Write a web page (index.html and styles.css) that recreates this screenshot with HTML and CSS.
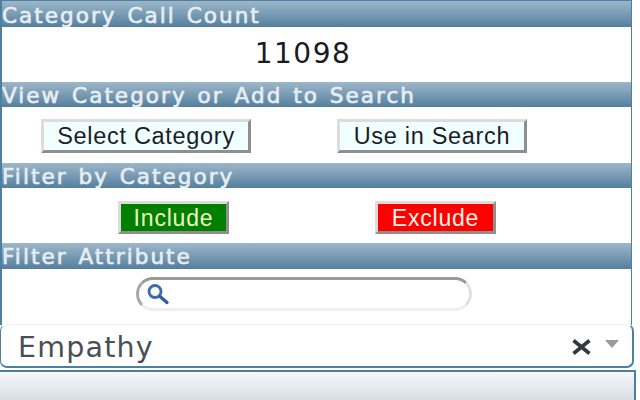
FILE: index.html
```html
<!DOCTYPE html>
<html lang="en">
<head>
<meta charset="utf-8">
<title>Category</title>
<link rel="stylesheet" href="styles.css">
</head>
<body>
<div class="page">
  <section class="panel">
    <h2 class="head">Category Call Count</h2>
    <div class="row count">11098</div>
    <h2 class="head h2">View Category or Add to Search</h2>
    <div class="row actions">
      <button class="btn b-select">Select Category</button>
      <button class="btn b-use">Use in Search</button>
    </div>
    <h2 class="head h2">Filter by Category</h2>
    <div class="row filters">
      <button class="btn include">Include</button>
      <button class="btn exclude">Exclude</button>
    </div>
    <h2 class="head h4">Filter Attribute</h2>
    <div class="row searchrow">
      <div class="search">
        <svg class="lens" width="28" height="24" viewBox="0 0 28 24"><circle cx="11" cy="9.5" r="6" fill="#f4f8fc" stroke="#3a6aa8" stroke-width="2.8"/><path d="M16 14.5 L23 20.5" stroke="#33609c" stroke-width="3.4" stroke-linecap="round"/></svg>
      </div>
    </div>
  </section>
  <div class="select">
    <span class="value">Empathy</span>
    <span class="clear">
      <svg width="20" height="16" viewBox="0 0 20 16"><path d="M1.5 1.5 L17.5 14.5 M17.5 1.5 L1.5 14.5" stroke="#33383f" stroke-width="3.6"/></svg>
    </span>
    <span class="caret"></span>
  </div>
  <div class="footer"></div>
</div>
</body>
</html>
```
FILE: styles.css
```css
html, body {
  margin: 0;
  padding: 0;
  background: #fff;
  overflow: hidden;
}
.page {
  width: 640px;
  height: 400px;
  position: relative;
  font-family: "Liberation Sans", Arial, sans-serif;
}
.panel {
  width: 632px;
  box-sizing: border-box;
  border-top: 1px solid #4f7f9f;
  border-left: 2px solid #4f7f9f;
  border-right: 1px solid #4f7f9f;
  height: 325px;
}
.head {
  margin: 0;
  height: 26px;
  box-sizing: border-box;
  padding: 2px 0 0 0;
  font-family: "DejaVu Sans", Verdana, sans-serif;
  font-size: 21.5px;
  font-weight: 400;
  line-height: 25px;
  letter-spacing: 2.05px;
  word-spacing: 2px;
  color: #e6edf3;
  background: linear-gradient(#9db7ca, #547f9e);
  white-space: nowrap;
  overflow: hidden;
  -webkit-text-stroke: 0.7px #e6edf3;
}
.h2 {
  height: 25px;
  line-height: 24px;
}
.h4 {
  height: 26px;
  line-height: 24px;
}
.row {
  height: 55px;
  display: flex;
  box-sizing: border-box;
}
.count {
  height: 55px;
  justify-content: center;
  padding-top: 10px;
  padding-right: 27px;
  font-family: "DejaVu Sans", Verdana, sans-serif;
  font-size: 28px;
  line-height: 34px;
  letter-spacing: 1.5px;
  color: #1a1a22;
}
.actions {
  height: 56px;
  padding: 12px 0 0 39px;
  gap: 86px;
}
.filters {
  padding: 13px 0 0 116px;
  gap: 146px;
}
.btn {
  margin: 0;
  height: 34px;
  box-sizing: border-box;
  border-style: solid;
  border-width: 3px;
  border-color: #dcdcdc #8f8f8f #8f8f8f #dcdcdc;
  font-family: "Liberation Sans", Arial, sans-serif;
  font-size: 23.5px;
  letter-spacing: 0.7px;
  line-height: 26px;
  padding: 0;
  color: #1c1c28;
  background: #f0ffff;
}
.b-select { width: 210px; }
.b-use { width: 190px; }
.include, .exclude {
  height: 33px;
  font-size: 23px;
  letter-spacing: 0.8px;
  line-height: 25px;
  padding-top: 1px;
}
.include {
  width: 111px;
  background: #008000;
  color: #f0f6c0;
}
.exclude {
  width: 121px;
  background: #ff0000;
  color: #fff4e8;
}
.searchrow {
  padding: 8px 0 0 134px;
}
.search {
  width: 336px;
  height: 34px;
  box-sizing: border-box;
  border: 3px solid #efefef;
  border-top-color: #9a9a9a;
  border-left-color: #a8a8a8;
  border-right-color: #e0e0e0;
  border-radius: 17px;
  display: flex;
  align-items: center;
  padding-left: 5px;
  background: #fff;
}
.lens { display: block; }
.select {
  position: relative;
  margin-top: -1px;
  width: 634px;
  height: 44px;
  box-sizing: border-box;
  border: 1px solid #4f7f9f;
  border-top-color: #f2f2f2;
  border-radius: 7px;
  border-width: 1px 2px 2px 1px;
  background: #fff;
  display: flex;
  align-items: center;
  padding: 0 13px 0 17px;
}
.value {
  flex: 1;
  padding-top: 3px;
  font-family: "DejaVu Sans", Verdana, sans-serif;
  font-size: 28.5px;
  letter-spacing: 1.2px;
  color: #4a4f55;
}
.clear {
  display: flex;
  margin-right: 13px;
  padding-top: 3px;
}
.caret {
  width: 0;
  height: 0;
  border-left: 7.5px solid transparent;
  border-right: 7.5px solid transparent;
  border-top: 8px solid #999;
  margin-bottom: 4px;
}
.footer {
  width: 636px;
  height: 32px;
  margin-top: 2px;
  box-sizing: border-box;
  border-top: 2px solid #4f7f9f;
  border-right: 2px solid #4f7f9f;
  background: linear-gradient(#f6f7f8, #d5dde5);
}
```
